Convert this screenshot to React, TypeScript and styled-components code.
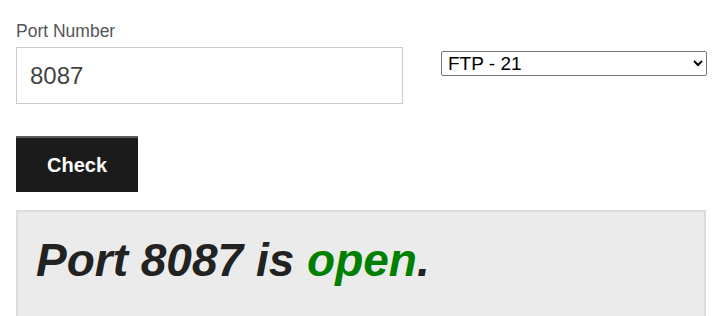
import React, { useState } from "react";
import styled, { createGlobalStyle } from "styled-components";

const GlobalStyle = createGlobalStyle`
  html, body {
    margin: 0;
    padding: 0;
    background: #ffffff;
    font-family: "Liberation Sans", Arial, sans-serif;
  }
`;

const Page = styled.div`
  padding: 21px 6px 0 16px;
`;

const FormRow = styled.div`
  display: flex;
  align-items: flex-start;
  gap: 38px;
`;

const Field = styled.div`
  display: flex;
  flex-direction: column;
  width: 387px;
`;

const Label = styled.label`
  font-size: 17.5px;
  line-height: 20px;
  color: #555555;
  margin-bottom: 6px;
`;

const PortInput = styled.input`
  box-sizing: border-box;
  width: 387px;
  height: 57px;
  padding: 0 13px;
  border: 1px solid #cccccc;
  font-family: "Liberation Sans", Arial, sans-serif;
  font-size: 24px;
  color: #444444;
  outline: none;
`;

const ProtocolSelect = styled.select`
  box-sizing: border-box;
  margin-top: 30px;
  width: 266px;
  height: 25px;
  font-family: "Liberation Sans", Arial, sans-serif;
  font-size: 19px;
  color: #000000;
  background: #ffffff;
  border: 1px solid #767676;
  border-radius: 2px;
  padding: 0 2px;
`;

const CheckButton = styled.button`
  margin-top: 32px;
  width: 122px;
  height: 56px;
  background: #1b1b1b;
  border: none;
  border-top: 2px solid #5a5a5a;
  color: #ffffff;
  font-family: "Liberation Sans", Arial, sans-serif;
  font-weight: bold;
  font-size: 20px;
  cursor: pointer;
`;

const ResultBox = styled.div`
  box-sizing: border-box;
  margin-top: 18px;
  background: #ebebeb;
  border: 2px solid #dddddd;
  border-bottom: none;
  width: 690px;
  padding: 22px 18px 40px;
`;

const ResultText = styled.h2`
  margin: 0;
  font-size: 46px;
  line-height: 1.15;
  font-style: italic;
  font-weight: bold;
  color: #222222;
`;

const Status = styled.span<{ open: boolean }>`
  color: ${(p) => (p.open ? "#008000" : "#cc0000")};
`;

const App: React.FunctionComponent<{}> = () => {
  const [port, setPort] = useState("8087");

  return (
    <Page>
      <GlobalStyle />
      <FormRow>
        <Field>
          <Label>Port Number</Label>
          <PortInput value={port} onChange={(e) => setPort(e.target.value)} />
        </Field>
        <ProtocolSelect defaultValue="21">
          <option value="21">FTP - 21</option>
          <option value="22">SSH - 22</option>
          <option value="80">HTTP - 80</option>
          <option value="443">HTTPS - 443</option>
        </ProtocolSelect>
      </FormRow>
      <CheckButton>Check</CheckButton>
      <ResultBox>
        <ResultText>
          Port {port} is <Status open={true}>open</Status>.
        </ResultText>
      </ResultBox>
    </Page>
  );
};

export default App;
